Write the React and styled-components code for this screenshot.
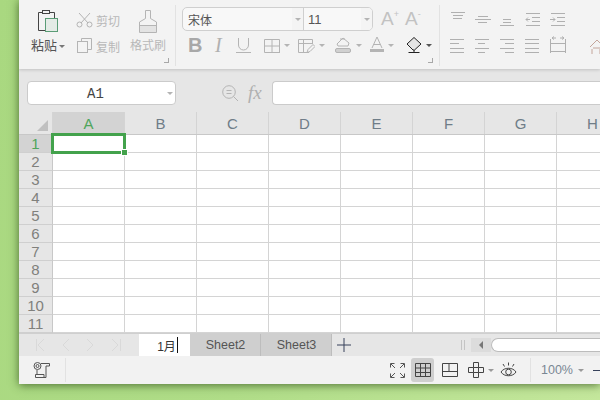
import React from 'react';
import styled, { createGlobalStyle } from 'styled-components';

const GlobalStyle = createGlobalStyle`
  html, body { margin: 0; height: 100%; overflow: hidden; }
  body {
    background: linear-gradient(100deg, #a9d880 0%, #b0dd88 45%, #c4e79c 100%);
    font-family: "Liberation Sans", "Noto Sans CJK SC", sans-serif;
  }
`;

const COLUMNS = ['A', 'B', 'C', 'D', 'E', 'F', 'G', 'H'];
const ROWS = [1, 2, 3, 4, 5, 6, 7, 8, 9, 10, 11];

const Icon = ({ w = 16, h = 16, stroke = '#b4b4b4', sw = 1, children, ...rest }) => (
  <svg width={w} height={h} viewBox={`0 0 ${w} ${h}`} fill="none" stroke={stroke} strokeWidth={sw} style={{ flex: 'none', display: 'block' }} {...rest}>
    {children}
  </svg>
);

const Caret = styled.span`
  display: block;
  flex: none;
  width: 0;
  height: 0;
  border-left: 3px solid transparent;
  border-right: 3px solid transparent;
  border-top: 3px solid ${(p) => p.$color || '#b4b4b4'};
`;

const Lines = ({ rows, stroke = '#b0b0b0' }) => (
  <Icon w={16} h={18} stroke={stroke}>
    {rows.map(([x1, x2, y]) => (
      <line key={`${x1}-${y}`} x1={x1} x2={x2} y1={y + 0.5} y2={y + 0.5} />
    ))}
  </Icon>
);

export default function App() {
  return (
    <>
      <GlobalStyle />
      <Page>
        <Window>
          <Ribbon>
            <ClipGroup>
              <PasteCol>
                <Icon w={24} h={25} stroke="#444">
                  <path d="M12 21.500H1.500V3.500H6M11 3.500H17.500V9" />
                  <rect x="5.500" y="1.500" width="7" height="3" fill="#f3f3f3" />
                  <rect x="8.500" y="9.500" width="12" height="13" fill="#e4ebe6" stroke="#5a9c76" />
                </Icon>
                <PasteLabel>粘贴<Caret $color="#777" /></PasteLabel>
              </PasteCol>
              <SmallCol>
                <SmallBtn>
                  <Icon w={17} h={16}>
                    <path d="M3 1l9 10M14 1L5 11" />
                    <circle cx="3.500" cy="12.500" r="2.500" />
                    <circle cx="13.500" cy="12.500" r="2.500" />
                  </Icon>
                  <span>剪切</span>
                </SmallBtn>
                <SmallBtn>
                  <Icon w={17} h={16}>
                    <path d="M5.500 3.500V.5H15.500V11.500H12" />
                    <rect x="1.500" y="3.500" width="10" height="11" />
                  </Icon>
                  <span>复制</span>
                </SmallBtn>
              </SmallCol>
              <BrushCol>
                <Icon w={20} h={25}>
                  <path d="M7.500 9.500V1.500H12.500V9.500L18.500 13V23.500H1.500V13Z" fill="#f3f3f3" />
                  <path d="M1.500 16.500H18.500" />
                  <rect x="2" y="17" width="16" height="6" fill="#e3e3e3" stroke="none" />
                </Icon>
                <span>格式刷</span>
              </BrushCol>
              <CornerMark />
            </ClipGroup>

            <FontGroup>
              <FontTop>
                <FontSelect>
                  <FontName>宋体<SelectEnd><Caret /></SelectEnd></FontName>
                  <FontSize>11<SelectEnd><Caret /></SelectEnd></FontSize>
                </FontSelect>
                <SizeGlyph>A<sup>+</sup></SizeGlyph>
                <SizeGlyph>A<sup>-</sup></SizeGlyph>
              </FontTop>
              <FontBottom>
                <BoldGlyph>B</BoldGlyph>
                <ItalicGlyph>I</ItalicGlyph>
                <Icon w={15} h={18}>
                  <path d="M2.500 2V9a5 5 0 0 0 10 0V2M0 16.500H15" />
                </Icon>
                <Tool $gap={13}>
                  <Icon w={16} h={16}>
                    <path d="M.5 2.500H15.500V16M.5 2.500V15.500H15.500M8 2.500V15.500M.5 9H15.500" />
                  </Icon>
                  <Caret />
                </Tool>
                <Tool $gap={8}>
                  <Icon w={17} h={16}>
                    <path d="M11 15.500H.5V2.500H14.500V7M.5 6.500H14.500M5.500 2.500V15" />
                    <path d="M9 15.500l1-3 5-5 2 2-5 5Z" />
                  </Icon>
                  <Caret />
                </Tool>
                <Tool $gap={10}>
                  <Icon w={17} h={18}>
                    <path d="M2 8l6-6 6 5-1 3H3Z" />
                    <path d="M5 3h5" />
                    <rect x=".5" y="12.500" width="15" height="4" rx="1.500" fill="#d0d0d0" />
                  </Icon>
                  <Caret />
                </Tool>
                <Tool $gap={8}>
                  <Icon w={14} h={18}>
                    <path d="M2 12L7 1l5 11M3.500 8.500h7" />
                    <rect y="13" width="14" height="3" fill="#b4b4b4" stroke="none" />
                  </Icon>
                  <Caret />
                </Tool>
                <Tool $gap={12}>
                  <Icon w={16} h={18} stroke="#222">
                    <path d="M1 8L8 1.500l7 6.500-6.500 6H7Z" fill="#e4e4e4" />
                    <path d="M2.500 16.500h11M8 14V16" />
                  </Icon>
                  <Caret $color="#555" />
                </Tool>
              </FontBottom>
              <CornerMark />
            </FontGroup>

            <AlignGroup>
              <AlignRow>
                <Lines rows={[[1, 15, 3], [3, 13, 6], [3, 12, 9]]} />
                <Lines rows={[[3, 13, 7], [0, 16, 10], [3, 12, 13]]} />
                <Lines rows={[[3, 11, 10], [3, 11, 13], [0, 14, 16]]} />
                <Icon w={16} h={18} stroke="#b0b0b0">
                  <path d="M1 4.500H15M7 8.500H15M7 12.500H15M1 16.500H15M5 10.500H1M3 8.500L1 10.500L3 12.500" />
                </Icon>
                <Icon w={16} h={18} stroke="#b0b0b0">
                  <path d="M1 4.500H15M7 8.500H15M7 12.500H15M1 16.500H15M0 10.500H5M3 8.500L5 10.500L3 12.500" />
                </Icon>
              </AlignRow>
              <AlignRow>
                <Lines rows={[[0, 14, 3], [0, 9, 7], [0, 14, 12], [0, 14, 16]]} />
                <Lines rows={[[0, 14, 3], [3, 10, 7], [0, 14, 12], [3, 10, 16]]} />
                <Lines rows={[[0, 14, 3], [5, 14, 7], [0, 14, 12], [5, 14, 16]]} />
                <Lines rows={[[0, 14, 3], [0, 14, 7], [0, 14, 12], [0, 14, 16]]} />
                <Icon w={16} h={18} stroke="#b0b0b0">
                  <path d="M.5 3V17M15.500 3V17M1 7.500H15M1 15.500H15M2 2H6M10 2H14M4 .5L2 2L4 3.500M12 .5L14 2L12 3.500" />
                </Icon>
                <MergeIcon>
                  <Icon w={12} h={18} stroke="#c4a59a">
                    <path d="M0 11L7 4l7 7M3 12H11M2 13V18M10 13V18" />
                  </Icon>
                </MergeIcon>
              </AlignRow>
            </AlignGroup>
          </Ribbon>

          <FormulaBar>
            <NameBox>A1<NameCaret><Caret /></NameCaret></NameBox>
            <FormulaTools>
              <Icon w={16} h={16}>
                <circle cx="7" cy="7" r="6.300" />
                <path d="M11.500 11.500L16 16M4.500 5.500H9.500M4.500 8.500H9.500" />
              </Icon>
              <FxGlyph>fx</FxGlyph>
            </FormulaTools>
            <FormulaInput />
          </FormulaBar>

          <Sheet>
            <HeaderRow>
              <CornerCell><Triangle /></CornerCell>
              {COLUMNS.map((c, i) => (
                <ColHead key={c} $active={i === 0}>{c}</ColHead>
              ))}
            </HeaderRow>
            {ROWS.map((r) => (
              <GridRow key={r}>
                <RowHead $active={r === 1}>{r}</RowHead>
                {COLUMNS.map((c) => <Cell key={c} />)}
              </GridRow>
            ))}
            <Selection><Handle /></Selection>
          </Sheet>

          <TabBar>
            <NavArrows>
              <Icon w={88} h={14} stroke="#d9d9d9">
                <path d="M1.500 1V13M9 1L3 7l6 6M34 1L28 7l6 6M52 1l6 6-6 6M77 1l6 6-6 6M85.500 1V13" />
              </Icon>
            </NavArrows>
            <ActiveTab>1月<Cursor /></ActiveTab>
            <SheetTab>Sheet2</SheetTab>
            <SheetTab>Sheet3</SheetTab>
            <AddTab>
              <Icon w={14} h={14} stroke="#36415a">
                <path d="M7 0V14M0 7H14" />
              </Icon>
            </AddTab>
            <Scroller>
              <Grip />
              <ScrollArrow><ArrowLeft /></ScrollArrow>
              <ScrollThumb />
            </Scroller>
          </TabBar>

          <StatusBar>
            <StatusLeft>
              <Icon w={17} h={18} stroke="#555">
                <circle cx="4.500" cy="4" r="3.500" />
                <circle cx="4.500" cy="4" r="1.500" />
                <path d="M8 1.500H16.500V4H13V15.500H2.500V12.500H11V15.500M4 8V12" />
              </Icon>
            </StatusLeft>
            <StatusRight>
              <Icon w={15} h={15} stroke="#555">
                <path d="M.5 4.500V.5H4.500M10.500.5H14.500V4.500M.5 10.500V14.500H4.500M14.500 10.500V14.500H10.500M1 1L5 5M14 1L10 5M1 14L5 10M14 14L10 10" />
              </Icon>
              <ViewBtn>
                <Icon w={16} h={14} stroke="#444">
                  <path d="M.5.5H15.500V13.500H.5ZM.5 5H15.500M.5 9.500H15.500M5.500.5V13.500M10.500.5V13.500" />
                </Icon>
              </ViewBtn>
              <PlainView>
                <Icon w={16} h={14} stroke="#444">
                  <path d="M.5.5H15.500V13.500H.5ZM.5 8.500H15.500M7 .5V8.500" />
                </Icon>
              </PlainView>
              <CrossView>
                <Icon w={16} h={16} stroke="#444">
                  <path d="M5.500.5H10.500V5.500H15.500V10.500H10.500V15.500H5.500V10.500H.5V5.500H5.500ZM5.500 5.500H10.500V10.500H5.500Z" />
                </Icon>
                <Caret $color="#999" />
              </CrossView>
              <EyeView>
                <Icon w={17} h={16} stroke="#444">
                  <path d="M1 10c3-5 12-5 15 0-3 5-12 5-15 0Z" />
                  <circle cx="8.500" cy="10" r="2.800" />
                  <path d="M3 2l1.500 2.500M8.500 0.500V3.500M14 2l-1.500 2.500" />
                </Icon>
              </EyeView>
              <ZoomValue>100%<Caret $color="#999" /></ZoomValue>
              <ZoomMinus />
            </StatusRight>
          </StatusBar>
        </Window>
      </Page>
    </>
  );
}

const Page = styled.div`
  padding-left: 19px;
  height: 400px;
  overflow: hidden;
`;

const Window = styled.div`
  width: 581px;
  height: 384px;
  display: flex;
  flex-direction: column;
  background: #f2f2f2;
  box-shadow: 0 1px 9px rgba(30, 60, 10, 0.7);
  overflow: hidden;
`;

const Ribbon = styled.div`
  height: 69px;
  flex: none;
  display: flex;
  background: #f3f3f3;
  box-shadow: 0 1px 3px rgba(0, 0, 0, 0.16);
  position: relative;
  z-index: 1;
`;

const ClipGroup = styled.div`
  position: relative;
  width: 157px;
  margin: 5px 0 3px;
  padding: 4px 0 0 11px;
  box-sizing: border-box;
  flex: none;
  display: flex;
  border-right: 1px solid #e2e2e2;
`;

const PasteCol = styled.div`
  width: 46px;
  flex: none;
  padding-left: 7px;
  box-sizing: border-box;
`;

const PasteLabel = styled.div`
  display: flex;
  align-items: center;
  gap: 2px;
  margin: 4px 0 0 -6px;
  font-size: 13px;
  line-height: 16px;
  color: #555;
`;

const SmallCol = styled.div`
  width: 54px;
  flex: none;
  padding-top: 3px;
  display: flex;
  flex-direction: column;
  gap: 10px;
`;

const SmallBtn = styled.div`
  display: flex;
  align-items: center;
  gap: 3px;
  height: 16px;
  font-size: 12px;
  color: #b8b8b8;
`;

const BrushCol = styled.div`
  width: 36px;
  flex: none;
  display: flex;
  flex-direction: column;
  align-items: center;
  gap: 4px;
  font-size: 12px;
  line-height: 16px;
  color: #b8b8b8;
`;

const CornerMark = styled.span`
  position: absolute;
  right: 6px;
  bottom: 3px;
  width: 4px;
  height: 4px;
  border-right: 1px solid #a8a8a8;
  border-bottom: 1px solid #a8a8a8;
`;

const FontGroup = styled.div`
  position: relative;
  width: 264px;
  margin: 5px 0 3px;
  padding: 2px 0 0 6px;
  box-sizing: border-box;
  flex: none;
  border-right: 1px solid #e2e2e2;
`;

const FontTop = styled.div`
  display: flex;
  align-items: center;
  gap: 8px;
`;

const FontSelect = styled.div`
  width: 191px;
  height: 24px;
  box-sizing: border-box;
  display: flex;
  background: #f8f8f8;
  border: 1px solid #cfcfcf;
  border-radius: 5px;
  overflow: hidden;
  font-size: 12px;
  color: #555;
`;

const FontName = styled.div`
  width: 121px;
  flex: none;
  box-sizing: border-box;
  display: flex;
  align-items: center;
  justify-content: space-between;
  padding-left: 5px;
  border-right: 1px solid #cfcfcf;
`;

const FontSize = styled(FontName)`
  flex: 1;
  width: auto;
  border-right: none;
  padding-left: 4px;
  font-size: 13px;
`;

const SelectEnd = styled.span`
  width: 11px;
  height: 100%;
  display: flex;
  align-items: center;
  justify-content: center;
  background: #f4f4f4;
`;

const SizeGlyph = styled.span`
  width: 16px;
  font-size: 19px;
  line-height: 22px;
  color: #c2c2c2;
  position: relative;
  white-space: nowrap;
  sup { font-size: 9px; line-height: 0; vertical-align: 8px; }
`;

const FontBottom = styled.div`
  display: flex;
  align-items: center;
  margin-top: 5px;
  padding-left: 6px;
  height: 18px;
`;

const BoldGlyph = styled.span`
  flex: none;
  width: 27px;
  font-size: 20px;
  font-weight: bold;
  color: #a8a8a8;
`;

const ItalicGlyph = styled.span`
  flex: none;
  width: 21px;
  font: italic 20px "Liberation Serif", serif;
  color: #b0b0b0;
`;

const Tool = styled.div`
  display: flex;
  flex: none;
  align-items: center;
  gap: 4px;
  margin-left: ${(p) => p.$gap}px;
`;

const AlignGroup = styled.div`
  flex: 1;
  padding: 9px 0 0 10px;
  display: flex;
  flex-direction: column;
  gap: 8px;
  min-width: 0;
`;

const AlignRow = styled.div`
  display: flex;
  gap: 9px;
  height: 19px;
`;

const MergeIcon = styled.div`
  margin-left: 15px;
`;

const FormulaBar = styled.div`
  height: 43px;
  flex: none;
  display: flex;
  align-items: center;
  padding: 5px 0 0 8px;
  box-sizing: border-box;
  background: #e6e6e6;
`;

const NameBox = styled.div`
  position: relative;
  width: 149px;
  height: 24px;
  flex: none;
  box-sizing: border-box;
  display: flex;
  align-items: center;
  justify-content: center;
  padding: 2px 12px 0 0;
  background: #fff;
  border: 1px solid #cbcbcb;
  border-radius: 4px;
  font: 14px "Liberation Mono", monospace;
  color: #444;
`;

const NameCaret = styled.span`
  position: absolute;
  right: 2px;
  top: 10px;
`;

const FormulaTools = styled.div`
  width: 96px;
  flex: none;
  display: flex;
  align-items: center;
  padding-left: 46px;
  box-sizing: border-box;
  gap: 10px;
`;

const FxGlyph = styled.span`
  font: italic 19px "Liberation Serif", serif;
  color: #b0b0b0;
`;

const FormulaInput = styled.div`
  flex: 1;
  height: 24px;
  box-sizing: border-box;
  background: #fff;
  border: 1px solid #cbcbcb;
  border-right: none;
  border-radius: 4px 0 0 4px;
`;

const Sheet = styled.div`
  position: relative;
  flex: 1;
  background: #fff;
  overflow: hidden;
`;

const HeaderRow = styled.div`
  display: grid;
  grid-template-columns: 34px repeat(8, 72px);
  height: 22px;
  background: #e6e6e6;
  border-bottom: 1px solid #c8c8c8;
`;

const CornerCell = styled.div`
  position: relative;
  border-right: 1px solid #d4d4d4;
`;

const Triangle = styled.span`
  position: absolute;
  right: 4px;
  bottom: 3px;
  width: 0;
  height: 0;
  border-left: 11px solid transparent;
  border-bottom: 11px solid #c0c0c0;
`;

const ColHead = styled.div`
  display: flex;
  align-items: center;
  justify-content: center;
  box-sizing: border-box;
  border-right: 1px solid #d4d4d4;
  font-size: 15px;
  color: ${(p) => (p.$active ? '#4fa55c' : '#6f7d88')};
  background: ${(p) => (p.$active ? '#d3d3d3' : 'transparent')};
`;

const GridRow = styled.div`
  display: grid;
  grid-template-columns: 34px repeat(8, 72px);
  height: 18px;
`;

const RowHead = styled.div`
  display: flex;
  align-items: center;
  justify-content: center;
  box-sizing: border-box;
  background: ${(p) => (p.$active ? '#d3d3d3' : '#e6e6e6')};
  border-right: 1px solid #c8c8c8;
  border-bottom: 1px solid #cfcfcf;
  font-size: 15px;
  color: ${(p) => (p.$active ? '#4fa55c' : '#80807c')};
`;

const Cell = styled.div`
  box-sizing: border-box;
  border-right: 1px solid #d4d4d4;
  border-bottom: 1px solid #d4d4d4;
`;

const Selection = styled.div`
  position: absolute;
  left: 32px;
  top: 21px;
  width: 75px;
  height: 21px;
  box-sizing: border-box;
  border: 3px solid #43a24c;
`;

const Handle = styled.span`
  position: absolute;
  right: -5px;
  bottom: -5px;
  width: 5px;
  height: 5px;
  background: #43a24c;
  border: 1px solid #fff;
`;

const TabBar = styled.div`
  height: 23px;
  flex: none;
  display: flex;
  background: #e6e6e6;
  border-top: 1px solid #cfcfcf;
  box-sizing: border-box;
`;

const NavArrows = styled.div`
  width: 120px;
  flex: none;
  box-sizing: border-box;
  padding: 4px 0 0 16px;
`;

const ActiveTab = styled.div`
  width: 51px;
  flex: none;
  box-sizing: border-box;
  display: flex;
  align-items: center;
  justify-content: center;
  padding-left: 6px;
  background: #fff;
  font-size: 12px;
  color: #333;
`;

const Cursor = styled.span`
  width: 1px;
  height: 16px;
  background: #111;
  margin-left: 1px;
`;

const SheetTab = styled.div`
  width: 71px;
  flex: none;
  box-sizing: border-box;
  display: flex;
  align-items: center;
  justify-content: center;
  padding-left: 1px;
  background: #cfcfcf;
  border-right: 1px solid #bdbdbd;
  font-size: 12.5px;
  color: #555;
`;

const AddTab = styled.div`
  width: 24px;
  flex: none;
  display: flex;
  align-items: center;
  justify-content: center;
`;

const Scroller = styled.div`
  flex: 1;
  display: flex;
  align-items: center;
  padding-left: 105px;
`;

const Grip = styled.span`
  width: 2px;
  height: 10px;
  margin-right: 6px;
  border-left: 1px solid #c4c4c4;
  border-right: 1px solid #c4c4c4;
`;

const ScrollArrow = styled.span`
  width: 20px;
  height: 14px;
  display: flex;
  align-items: center;
  justify-content: center;
  background: #dcdcdc;
`;

const ArrowLeft = styled.span`
  width: 0;
  height: 0;
  border-top: 4px solid transparent;
  border-bottom: 4px solid transparent;
  border-right: 4px solid #777;
`;

const ScrollThumb = styled.span`
  flex: 1;
  box-sizing: border-box;
  background: #fff;
  border: 1px solid #bcbcbc;
  border-right: none;
  border-radius: 7px 0 0 7px;
  height: 14px;
`;

const StatusBar = styled.div`
  height: 28px;
  flex: none;
  display: flex;
  justify-content: space-between;
  background: #f2f2f2;
`;

const StatusLeft = styled.div`
  width: 47px;
  box-sizing: border-box;
  margin: 2px 0;
  padding: 4px 0 0 14px;
  border-right: 1px solid #e2e2e2;
`;

const StatusRight = styled.div`
  display: flex;
  align-items: center;
`;

const ViewBtn = styled.div`
  width: 23px;
  height: 24px;
  margin-left: 6px;
  border-radius: 3px;
  background: #cfcfcf;
  display: flex;
  align-items: center;
  justify-content: center;
`;

const PlainView = styled.div`
  margin-left: 8px;
`;

const CrossView = styled.div`
  display: flex;
  align-items: center;
  gap: 4px;
  margin-left: 10px;
`;

const EyeView = styled.div`
  margin-left: 6px;
`;

const ZoomValue = styled.div`
  display: flex;
  align-items: center;
  gap: 5px;
  height: 24px;
  margin-left: 13px;
  padding-left: 10px;
  border-left: 1px solid #e2e2e2;
  font-size: 12.5px;
  color: #7a8794;
`;

const ZoomMinus = styled.span`
  width: 7px;
  height: 1px;
  margin-left: 9px;
  background: #36415a;
`;
